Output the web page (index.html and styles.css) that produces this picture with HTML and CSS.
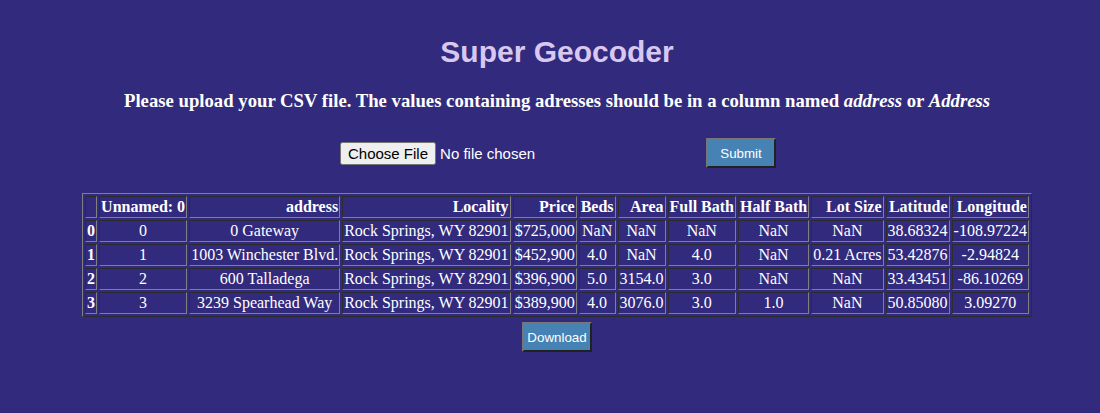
FILE: index.html
```html
<!DOCTYPE html>
<html>
<head>
<meta charset="utf-8">
<title>Super Geocoder</title>
<link rel="stylesheet" href="styles.css">
</head>
<body>
<div class="page">
  <h1 class="title">Super Geocoder</h1>
  <h3 class="subtitle">Please upload your CSV file. The values containing adresses should be in a column named <em>address</em> or <em>Address</em></h3>
  <form class="upload">
    <input class="file" type="file" name="file">
    <button class="btn submit" type="button">Submit</button>
  </form>
  <table class="dataframe">
    <thead>
      <tr>
        <th></th>
        <th>Unnamed: 0</th>
        <th>address</th>
        <th>Locality</th>
        <th>Price</th>
        <th>Beds</th>
        <th>Area</th>
        <th>Full Bath</th>
        <th>Half Bath</th>
        <th>Lot Size</th>
        <th>Latitude</th>
        <th>Longitude</th>
      </tr>
    </thead>
    <tbody>
      <tr>
        <th>0</th><td>0</td><td>0 Gateway</td><td>Rock Springs, WY 82901</td><td>$725,000</td><td>NaN</td><td>NaN</td><td>NaN</td><td>NaN</td><td>NaN</td><td>38.68324</td><td>-108.97224</td>
      </tr>
      <tr>
        <th>1</th><td>1</td><td>1003 Winchester Blvd.</td><td>Rock Springs, WY 82901</td><td>$452,900</td><td>4.0</td><td>NaN</td><td>4.0</td><td>NaN</td><td>0.21 Acres</td><td>53.42876</td><td>-2.94824</td>
      </tr>
      <tr>
        <th>2</th><td>2</td><td>600 Talladega</td><td>Rock Springs, WY 82901</td><td>$396,900</td><td>5.0</td><td>3154.0</td><td>3.0</td><td>NaN</td><td>NaN</td><td>33.43451</td><td>-86.10269</td>
      </tr>
      <tr>
        <th>3</th><td>3</td><td>3239 Spearhead Way</td><td>Rock Springs, WY 82901</td><td>$389,900</td><td>4.0</td><td>3076.0</td><td>3.0</td><td>1.0</td><td>NaN</td><td>50.85080</td><td>3.09270</td>
      </tr>
    </tbody>
  </table>
  <div class="actions">
    <button class="btn download" type="button">Download</button>
  </div>
</div>
</body>
</html>
```

FILE: styles.css
```css
html, body {
  margin: 0;
  padding: 0;
  background: #322a7c;
}
body {
  font-family: "Liberation Serif", "Times New Roman", serif;
  color: #ffffff;
}
.page {
  padding: 34px 0 40px 14px;
  display: flex;
  flex-direction: column;
  align-items: center;
}
.title {
  margin: 0;
  font-family: "Liberation Sans", Arial, sans-serif;
  font-size: 30px;
  font-weight: bold;
  line-height: 35px;
  color: #d8c8f1;
}
.subtitle {
  margin: 21px 0 0;
  font-size: 18.72px;
  font-weight: bold;
  line-height: 22px;
  color: #ffffff;
}
.upload {
  margin: 26px 0 0 2px;
  display: flex;
  align-items: center;
}
.file {
  width: 196px;
  font-family: "Liberation Sans", Arial, sans-serif;
  font-size: 15px;
  color: #ffffff;
}
.btn {
  width: 70px;
  height: 30px;
  padding: 0;
  background: #4682b4;
  color: #ffffff;
  border: 2px outset #767676;
  font-family: "Liberation Sans", Arial, sans-serif;
  font-size: 13.33px;
}
.submit {
  margin-left: 170px;
}
.dataframe {
  margin-top: 25px;
  border: 1px outset #808080;
  border-spacing: 2px;
  font-size: 16px;
  color: #ffffff;
}
.dataframe th,
.dataframe td {
  border: 1px inset #808080;
  padding: 1px;
}
.dataframe thead th {
  text-align: right;
}
.dataframe td {
  text-align: center;
}
.actions {
  margin-top: 5px;
  display: flex;
}
```
